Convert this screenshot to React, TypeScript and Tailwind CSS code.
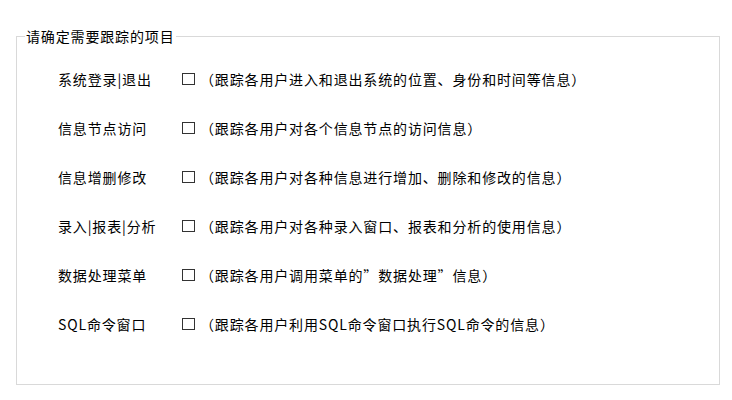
import React from "react";

const rows = [
  { label: "系统登录|退出", desc: "（跟踪各用户进入和退出系统的位置、身份和时间等信息）" },
  { label: "信息节点访问", desc: "（跟踪各用户对各个信息节点的访问信息）" },
  { label: "信息增删修改", desc: "（跟踪各用户对各种信息进行增加、删除和修改的信息）" },
  { label: "录入|报表|分析", desc: "（跟踪各用户对各种录入窗口、报表和分析的使用信息）" },
  { label: "数据处理菜单", desc: "（跟踪各用户调用菜单的\u201d数据处理\u201d信息）" },
  { label: "SQL命令窗口", desc: "（跟踪各用户利用SQL命令窗口执行SQL命令的信息）" },
];

export default function App() {
  return (
    <div
      className="w-[732px] h-[400px] bg-white text-black pl-4 pt-[28px] text-[14px] leading-[16px] tracking-[0.85px]"
      style={{ fontFamily: '"Noto Sans CJK SC", "Liberation Sans", sans-serif' }}
    >
      <fieldset className="w-[704px] h-[357px] border border-[#d9d9d9] px-[8px]">
        <legend className="px-[1px] text-[14px] leading-[16px]">请确定需要跟踪的项目</legend>
        <div className="pl-[33px] pt-[10px]">
          {rows.map((r) => (
            <div key={r.label} className="flex items-center h-[49px]">
              <span className="w-[124px]">{r.label}</span>
              <span className="w-[13px] h-[12px] border border-[#333] bg-white" />
              <span className="ml-[5px]">{r.desc}</span>
            </div>
          ))}
        </div>
      </fieldset>
    </div>
  );
}
